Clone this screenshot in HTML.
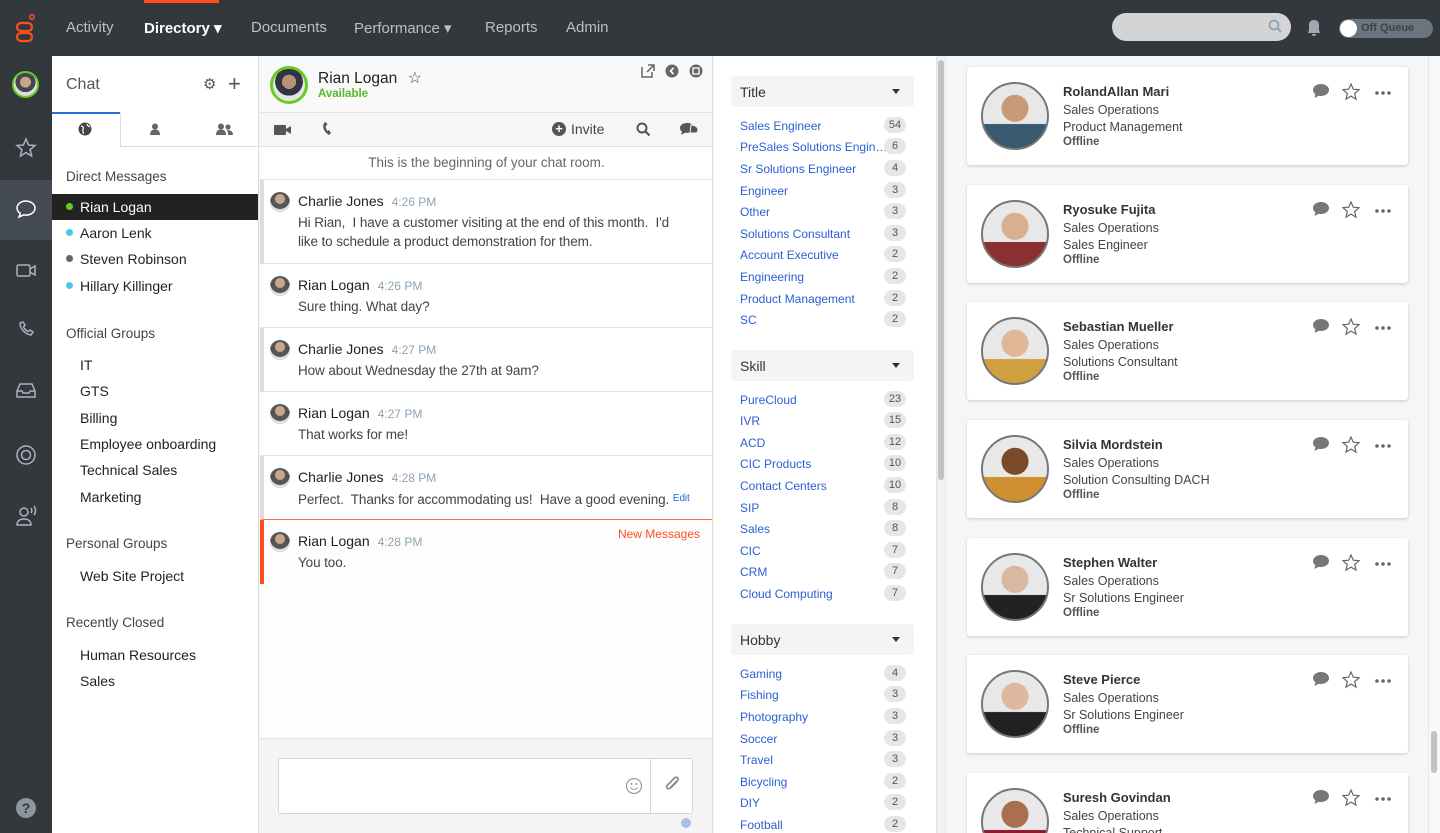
<!DOCTYPE html>
<html style="width:1440px;height:833px;overflow:hidden"><head><meta charset="utf-8"><style>
*{box-sizing:border-box;margin:0;padding:0}
body{width:1440px;height:833px;overflow:hidden;font-family:"Liberation Sans",sans-serif;background:#f6f6f6;position:relative;color:#333}
.a{position:absolute}
.top{left:0;top:0;width:1440px;height:56px;background:#33383d}
.nav{top:19px;font-size:15px;color:#b9c0c8}
.rail{left:0;top:56px;width:52px;height:777px;background:#33383d}
.side{left:52px;top:56px;width:207px;height:777px;background:#fff;border-right:1px solid #ddd;overflow:hidden}
.chat{left:260px;top:56px;width:453px;height:777px;background:#fdfdfd;border-right:1px solid #ddd;overflow:hidden}
.filt{left:714px;top:56px;width:222px;height:777px;background:#fff;overflow:hidden}
.msg{left:0;width:453px;height:64px;border-bottom:1px solid #e3e3e3;background:#fff}
.msg .av{position:absolute;left:10px;top:12px;width:20px;height:20px;border-radius:50%;background:radial-gradient(circle at 50% 35%,#c9a58a 0 30%,#555 31% 60%,#ddd 61%)}
.msg .n{position:absolute;left:38px;top:13px;font-size:14px;color:#222}
.msg .n span{font-size:12px;color:#8fa3b3;margin-left:8px}
.msg .t{position:absolute;left:38px;top:33px;font-size:13.5px;color:#444;line-height:19px;width:410px;letter-spacing:-0.1px}
.gl{border-left:4px solid #ddd}
.gl .av{left:6px}.gl .n,.gl .t{left:34px}
.fh{left:17px;width:183px;height:31px;background:#f4f4f4;border-radius:3px;font-size:14px;color:#333;padding:8px 9px}
.fh:after{content:"";position:absolute;right:14px;top:13px;border:4px solid transparent;border-top:5px solid #333}
.fi{left:26px;font-size:12px;color:#2a5fd3;width:166px;height:16px}
.fi b{position:absolute;right:0;top:-2px;min-width:22px;height:16px;border-radius:8px;background:#e6e6e6;color:#555;font-weight:normal;font-size:11px;text-align:center;line-height:16px;padding:0 4px}
.card{left:967px;width:441px;height:98px;background:#fff;border-radius:3px;box-shadow:0 1px 3px rgba(0,0,0,.18)}
.card .ph{position:absolute;left:14px;top:15px;width:68px;height:68px;border-radius:50%;border:2px solid #777}
.card .nm{position:absolute;left:96px;top:17px;font-size:13px;font-weight:bold;color:#333}
.card .l{position:absolute;left:96px;font-size:12.5px;color:#444}
.card .off{position:absolute;left:96px;top:69px;font-size:11.5px;font-weight:bold;color:#555}
.ic{position:absolute;top:16px}
.sec{left:14px;font-size:13.5px;color:#444}
.it{left:28px;font-size:14px;color:#222}
</style></head><body>
<div class="a top"></div>
<div class="a" style="left:144px;top:0;width:75px;height:3px;background:#ff4f1f"></div>
<svg class="a" style="left:15px;top:14px" width="22" height="30" viewBox="0 0 22 30"><circle cx="17" cy="3" r="2.2" fill="none" stroke="#ff4f1f" stroke-width="1.5"/><rect x="2" y="9" width="15" height="8" rx="4" fill="none" stroke="#ff4f1f" stroke-width="2.2"/><rect x="2" y="19" width="15" height="8" rx="4" fill="none" stroke="#ff4f1f" stroke-width="2.2"/></svg>
<div class="a nav" style="left:66px">Activity</div>
<div class="a nav" style="left:144px;color:#fff;font-weight:bold">Directory ▾</div>
<div class="a nav" style="left:251px">Documents</div>
<div class="a nav" style="left:354px">Performance ▾</div>
<div class="a nav" style="left:485px">Reports</div>
<div class="a nav" style="left:566px">Admin</div>
<div class="a" style="left:1112px;top:13px;width:179px;height:28px;border-radius:14px;background:#d4d4d4"></div>
<svg class="a" style="left:1268px;top:19px" width="14" height="14"><circle cx="6" cy="6" r="4.5" fill="none" stroke="#8fa3b8" stroke-width="1.8"/><path d="M9 9l4 4" stroke="#8fa3b8" stroke-width="2"/></svg>
<svg class="a" style="left:1307px;top:19px" width="14" height="18"><path d="M7 1c-3 0-5 2-5 5v5l-1 3h12l-1-3V6c0-3-2-5-5-5zM5 15a2 2 0 004 0z" fill="#a0aab5"/></svg>
<div class="a" style="left:1339px;top:19px;width:94px;height:19px;border-radius:10px;background:#6b7580"></div>
<div class="a" style="left:1340px;top:20px;width:17px;height:17px;border-radius:50%;background:#fff"></div>
<div class="a" style="left:1361px;top:22px;font-size:11px;font-weight:bold;color:#3a4148">Off Queue</div>

<div class="a rail"></div>
<div class="a" style="left:0;top:180px;width:52px;height:60px;background:#454b52"></div>
<div class="a" style="left:12px;top:71px;width:27px;height:27px;border-radius:50%;border:2px solid #66cc22;background:radial-gradient(circle at 50% 40%,#c9a58a 0 30%,#445 31% 55%,#ddd 56%)"></div>
<svg class="a" style="left:0;top:130px" width="52" height="420" fill="none" stroke="#a9b3bd" stroke-width="1.5">
<path d="M26 9l2.6 6 6.4.5-4.9 4.2 1.5 6.3L26 22.6 20.4 26l1.5-6.3L17 15.5l6.4-.5z"/>
<path d="M26 71c-5 0-9 3.2-9 7 0 2.2 1.3 4.1 3.3 5.4L19 87l4.5-2.1c.8.2 1.6.2 2.5.2 5 0 9-3.2 9-7s-4-7-9-7z" stroke="#fff"/>
<rect x="17" y="135" width="13" height="11" rx="1.5"/><path d="M30 139l5-3v9l-5-3"/>
<path d="M20 193c0 6 5 11 11 12l2-3-3-2-2 1.5c-2-1-3.5-2.5-4.5-4.5L25 195l-2-3-3 1z"/>
<path d="M17 261l3-7h12l3 7v6H17zM17 261h5l1 2h6l1-2h5"/>
<circle cx="26" cy="325" r="9"/><circle cx="26" cy="325" r="4.5"/>
<circle cx="24" cy="382" r="4"/><path d="M17 395c0-4 3-6 7-6s7 2 7 6z"/><path d="M31 378c1 1.5 1 3.5 0 5M34 376c2 2.5 2 6.5 0 9"/>
</svg>
<div class="a" style="left:16px;top:798px;width:20px;height:20px;border-radius:50%;background:#8c96a0;color:#33383d;font-size:14px;font-weight:bold;text-align:center;line-height:20px">?</div>

<div class="a side">
<div class="a" style="left:14px;top:20px;font-size:16px;color:#555">Chat</div>
<div class="a" style="left:151px;top:19px;font-size:15px;color:#555">⚙</div>
<div class="a" style="left:176px;top:15px;font-size:22px;color:#555;font-weight:300">+</div>
<div class="a" style="left:0;top:56px;width:68px;height:2px;background:#2a6dd6"></div>
<div class="a" style="left:68px;top:57px;width:139px;height:34px;border-bottom:1px solid #ddd;border-left:1px solid #ddd"></div>
<svg class="a" style="left:26px;top:66px" width="14" height="14"><circle cx="7" cy="7" r="6.5" fill="#444"/><path d="M3 4c2 0 3 2 2 3s1 3 0 5M9 2c0 2 2 2 3 3" stroke="#fff" stroke-width="1.2" fill="none"/></svg>
<svg class="a" style="left:97px;top:67px" width="12" height="13" fill="#666"><circle cx="6" cy="3.5" r="3"/><path d="M1 12c0-4 2-5.5 5-5.5s5 1.5 5 5.5z"/></svg>
<svg class="a" style="left:164px;top:67px" width="17" height="13" fill="#666"><circle cx="5" cy="3.5" r="3"/><path d="M0 12c0-4 2-5.5 5-5.5s5 1.5 5 5.5z"/><circle cx="12" cy="4" r="2.6"/><path d="M11 7c3 0 6 1 6 5h-5c0-2-.5-4-1-5z"/></svg>
<div class="a sec" style="top:113px">Direct Messages</div>
<div class="a" style="left:0;top:138px;width:206px;height:26px;background:#222"></div>
<div class="a" style="left:14px;top:147px;width:7px;height:7px;border-radius:50%;background:#66cc22"></div>
<div class="a it" style="top:143px;color:#fff">Rian Logan</div>
<div class="a" style="left:14px;top:173px;width:7px;height:7px;border-radius:50%;background:#4cc3f0"></div>
<div class="a it" style="top:169px">Aaron Lenk</div>
<div class="a" style="left:14px;top:199px;width:7px;height:7px;border-radius:50%;background:#666"></div>
<div class="a it" style="top:195px">Steven Robinson</div>
<div class="a" style="left:14px;top:226px;width:7px;height:7px;border-radius:50%;background:#4cc3f0"></div>
<div class="a it" style="top:222px">Hillary Killinger</div>
<div class="a sec" style="top:270px">Official Groups</div>
<div class="a it" style="top:301px">IT</div>
<div class="a it" style="top:327px">GTS</div>
<div class="a it" style="top:354px">Billing</div>
<div class="a it" style="top:380px">Employee onboarding</div>
<div class="a it" style="top:406px">Technical Sales</div>
<div class="a it" style="top:433px">Marketing</div>
<div class="a sec" style="top:480px">Personal Groups</div>
<div class="a it" style="top:512px">Web Site Project</div>
<div class="a sec" style="top:559px">Recently Closed</div>
<div class="a it" style="top:591px">Human Resources</div>
<div class="a it" style="top:617px">Sales</div>
</div>

<div class="a chat">
<div class="a" style="left:0;top:0;width:453px;height:57px;background:#f9f9f9;border-bottom:1px solid #e3e3e3"></div>
<div class="a" style="left:10px;top:10px;width:38px;height:38px;border-radius:50%;border:3px solid #66cc22;background:radial-gradient(circle at 50% 40%,#b89278 0 28%,#334 29% 55%,#e5e5e5 56%)"></div>
<div class="a" style="left:58px;top:12px;font-size:15.5px;color:#222">Rian Logan <span style="color:#444;font-size:16px;margin-left:6px">☆</span></div>
<div class="a" style="left:58px;top:32px;font-size:11.5px;font-weight:bold;color:#5cb82a">Available</div>
<svg class="a" style="left:381px;top:8px" width="62" height="14"><path d="M1 3v10h10V8M7 1h6v6M13 1L6 8" stroke="#666" stroke-width="1.5" fill="none"/><circle cx="31" cy="7" r="6.5" fill="#666"/><path d="M32.5 4l-3 3 3 3" stroke="#fff" stroke-width="1.6" fill="none"/><circle cx="55" cy="7" r="6.5" fill="#666"/><rect x="52" y="4" width="6" height="6" stroke="#fff" stroke-width="1.3" fill="none"/></svg>
<div class="a" style="left:0;top:57px;width:453px;height:34px;background:#f6f6f6;border-bottom:1px solid #e0e0e0"></div>
<svg class="a" style="left:14px;top:68px" width="18" height="12" fill="#555"><rect x="0" y="1" width="12" height="10" rx="1"/><path d="M12 5l5-3v8l-5-3z"/></svg>
<svg class="a" style="left:62px;top:66px" width="10" height="14"><path d="M2 1c-2 4 0 9 5 12l2-2-2-3-1.5 1C4 7 3.5 5 4 3.5L5.5 3 4 0z" fill="#555"/></svg>
<div class="a" style="left:292px;top:66px;width:14px;height:14px;border-radius:50%;background:#555;color:#fff;font-size:13px;line-height:13px;text-align:center;font-weight:bold">+</div>
<div class="a" style="left:311px;top:65px;font-size:14px;color:#444">Invite</div>
<svg class="a" style="left:376px;top:66px" width="15" height="15"><circle cx="6" cy="6" r="4.5" fill="none" stroke="#555" stroke-width="2"/><path d="M9.5 9.5l4 4" stroke="#555" stroke-width="2.2"/></svg>
<svg class="a" style="left:420px;top:66px" width="18" height="14" fill="#555"><path d="M7 1C3 1 0 3 0 6c0 1.5.8 2.8 2 3.6L1 13l4-2.3c.6.1 1.3.2 2 .2 4 0 7-2.2 7-5s-3-5-7-5z"/><path d="M11 3c4 0 7 2 7 5l-1 3H10z" stroke="#f6f6f6" stroke-width="1"/></svg>
<div class="a" style="left:0;top:91px;width:453px;height:33px;background:#fff;border-bottom:1px solid #e3e3e3;text-align:center;font-size:13.5px;color:#666;padding-top:8px">This is the beginning of your chat room.</div>
<div class="a msg gl" style="top:124px;height:84px"><div class="av"></div><div class="n">Charlie Jones<span>4:26 PM</span></div><div class="t" style="width:380px">Hi Rian,&nbsp; I have a customer visiting at the end of this month.&nbsp; I'd like to schedule a product demonstration for them.</div></div>
<div class="a msg" style="top:208px"><div class="av"></div><div class="n">Rian Logan<span>4:26 PM</span></div><div class="t">Sure thing. What day?</div></div>
<div class="a msg gl" style="top:272px"><div class="av"></div><div class="n">Charlie Jones<span>4:27 PM</span></div><div class="t">How about Wednesday the 27th at 9am?</div></div>
<div class="a msg" style="top:336px"><div class="av"></div><div class="n">Rian Logan<span>4:27 PM</span></div><div class="t">That works for me!</div></div>
<div class="a msg gl" style="top:400px;border-bottom:1px solid #ff6a3d"><div class="av"></div><div class="n">Charlie Jones<span>4:28 PM</span></div><div class="t" style="white-space:nowrap">Perfect.&nbsp; Thanks for accommodating us!&nbsp; Have a good evening. <span style="font-size:10px;color:#2a6dd6;vertical-align:3px">Edit</span></div></div>
<div class="a msg" style="top:464px;border-left:4px solid #ff4f1f;border-bottom:none;background:#fdfdfd"><div class="av" style="left:6px"></div><div class="n" style="left:34px">Rian Logan<span>4:28 PM</span></div><div class="t" style="left:34px">You too.</div><div class="a" style="right:13px;top:7px;font-size:12px;color:#ff4f1f">New Messages</div></div>
<div class="a" style="left:0;top:682px;width:453px;height:95px;background:#f4f4f4;border-top:1px solid #e3e3e3"></div>
<div class="a" style="left:18px;top:702px;width:415px;height:56px;background:#fff;border:1px solid #d5d5d5;border-radius:3px"></div>
<div class="a" style="left:390px;top:702px;width:1px;height:56px;background:#d5d5d5"></div>
<svg class="a" style="left:365px;top:721px" width="18" height="18"><circle cx="9" cy="9" r="7.5" fill="none" stroke="#999" stroke-width="1.2"/><circle cx="6.5" cy="7" r="1" fill="#999"/><circle cx="11.5" cy="7" r="1" fill="#999"/><path d="M5.5 10.5c1.5 2.5 5.5 2.5 7 0" stroke="#999" fill="none"/></svg>
<svg class="a" style="left:403px;top:720px" width="18" height="18"><path d="M14 5l-7 7c-1 1-2.5 1-3 0s-.5-2 .5-3l7-7c1.5-1.5 3.5-.5 3.5 1s-.5 2-1.5 3l-6 6" stroke="#888" stroke-width="1.6" fill="none"/></svg>
<div class="a" style="left:421px;top:762px;width:10px;height:10px;border-radius:50%;background:#a7c0e8"></div>
</div>

<div class="a filt">
<div class="a fh" style="top:20px">Title</div>
<div class="a fi" style="top:63px">Sales Engineer<b>54</b></div>
<div class="a fi" style="top:84px">PreSales Solutions Engin…<b>6</b></div>
<div class="a fi" style="top:106px">Sr Solutions Engineer<b>4</b></div>
<div class="a fi" style="top:128px">Engineer<b>3</b></div>
<div class="a fi" style="top:149px">Other<b>3</b></div>
<div class="a fi" style="top:171px">Solutions Consultant<b>3</b></div>
<div class="a fi" style="top:192px">Account Executive<b>2</b></div>
<div class="a fi" style="top:214px">Engineering<b>2</b></div>
<div class="a fi" style="top:236px">Product Management<b>2</b></div>
<div class="a fi" style="top:257px">SC<b>2</b></div>
<div class="a fh" style="top:294px">Skill</div>
<div class="a fi" style="top:337px">PureCloud<b>23</b></div>
<div class="a fi" style="top:358px">IVR<b>15</b></div>
<div class="a fi" style="top:380px">ACD<b>12</b></div>
<div class="a fi" style="top:401px">CIC Products<b>10</b></div>
<div class="a fi" style="top:423px">Contact Centers<b>10</b></div>
<div class="a fi" style="top:445px">SIP<b>8</b></div>
<div class="a fi" style="top:466px">Sales<b>8</b></div>
<div class="a fi" style="top:488px">CIC<b>7</b></div>
<div class="a fi" style="top:509px">CRM<b>7</b></div>
<div class="a fi" style="top:531px">Cloud Computing<b>7</b></div>
<div class="a fh" style="top:568px">Hobby</div>
<div class="a fi" style="top:611px">Gaming<b>4</b></div>
<div class="a fi" style="top:632px">Fishing<b>3</b></div>
<div class="a fi" style="top:654px">Photography<b>3</b></div>
<div class="a fi" style="top:676px">Soccer<b>3</b></div>
<div class="a fi" style="top:697px">Travel<b>3</b></div>
<div class="a fi" style="top:719px">Bicycling<b>2</b></div>
<div class="a fi" style="top:740px">DIY<b>2</b></div>
<div class="a fi" style="top:762px">Football<b>2</b></div>
</div>
<div class="a" style="left:936px;top:56px;width:11px;height:777px;background:#f0f0f0;border-left:1px solid #e2e2e2"></div>
<div class="a" style="left:938px;top:60px;width:6px;height:420px;border-radius:3px;background:#c2c2c2"></div>

<div id="cards" class="a" style="left:0;top:0;width:1440px;height:833px;overflow:hidden"></div>
<div class="a" style="left:1428px;top:56px;width:12px;height:777px;background:#f8f8f8;border-left:1px solid #e8e8e8"></div>
<div class="a" style="left:1431px;top:731px;width:6px;height:42px;border-radius:3px;background:#c2c2c2"></div>
<script>
var d=[["RolandAllan Mari","Product Management","#3a5a70","#c99a7a"],["Ryosuke Fujita","Sales Engineer","#8a3030","#d8b090"],["Sebastian Mueller","Solutions Consultant","#d0a040","#e0b898"],["Silvia Mordstein","Solution Consulting DACH","#d09030","#7a4a2a"],["Stephen Walter","Sr Solutions Engineer","#222","#d8b8a0"],["Steve Pierce","Sr Solutions Engineer","#222","#e0b8a0"],["Suresh Govindan","Technical Support","#8a1a2a","#a87050"]];
var tops=[67,185,302,420,538,655,773],h="";
d.forEach(function(c,i){h+='<div class="a card" style="top:'+tops[i]+'px"><div class="ph" style="background:radial-gradient(circle at 50% 38%,'+c[3]+' 0 26%,transparent 27%),linear-gradient(#e8e8e8 0 62%,'+c[2]+' 63%)"></div><div class="nm">'+c[0]+'</div><div class="l" style="top:36px">Sales Operations</div><div class="l" style="top:53px">'+c[1]+'</div><div class="off">Offline</div><svg class="ic" style="left:345px" width="18" height="16"><path d="M9 1C4.5 1 1 3.7 1 7c0 1.7.9 3.2 2.4 4.3L2.5 15l4.2-2.3c.7.2 1.5.3 2.3.3 4.5 0 8-2.7 8-6S13.5 1 9 1z" fill="#777"/></svg><svg class="ic" style="left:375px" width="18" height="18"><path d="M9 1l2.3 5.2 5.7.5-4.3 3.8 1.3 5.6L9 13.1 4 16.1l1.3-5.6L1 6.7l5.7-.5z" fill="none" stroke="#666" stroke-width="1.2"/></svg><svg class="ic" style="left:408px;top:24px" width="18" height="4" fill="#666"><circle cx="2" cy="2" r="1.8"/><circle cx="8" cy="2" r="1.8"/><circle cx="14" cy="2" r="1.8"/></svg></div>'});
document.getElementById("cards").innerHTML=h;
</script>
</body></html>
